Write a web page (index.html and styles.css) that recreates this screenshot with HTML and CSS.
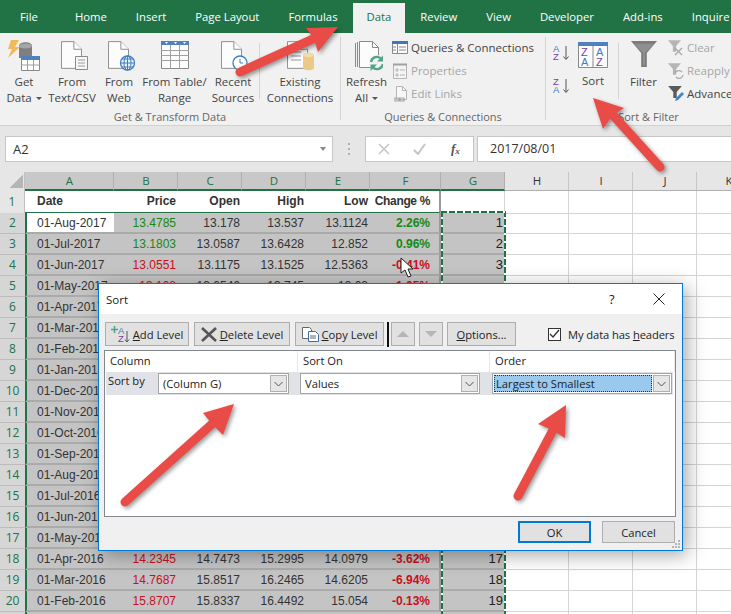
FILE: index.html
```html
<!DOCTYPE html>
<html lang="en">
<head>
<meta charset="utf-8">
<title>Excel Sort dialog</title>
<link rel="stylesheet" href="styles.css">
</head>
<body>
<svg class="defs" width="0" height="0">
  <symbol id="doc" viewBox="0 0 22 29"><path d="M.5.5h13l8 8v20H.5z" fill="#fcfcfc" stroke="#8a8a8a"/><path d="M13.5.5v8h8" fill="#fff" stroke="#8a8a8a"/></symbol>
  <symbol id="chev" viewBox="0 0 9 6"><path d="M.5 1l4 4 4-4" fill="none" stroke="#555" stroke-width="1"/></symbol>
  <symbol id="funnel" viewBox="0 0 16 14"><path d="M0 0h16L10 7v7H6V7z"/></symbol>
</svg>
<div class="app">
  <nav class="tabs">
    <span class="tab file">File</span><span class="tab">Home</span><span class="tab">Insert</span><span class="tab">Page Layout</span><span class="tab">Formulas</span><span class="tab active">Data</span><span class="tab">Review</span><span class="tab">View</span><span class="tab">Developer</span><span class="tab">Add-ins</span><span class="tab">Inquire</span>
  </nav>

  <div class="ribbon">
    <section class="group g-get">
      <div class="group-body">
        <div class="big w-get">
          <svg class="ico" width="32" height="32" viewBox="9 40 32 32"><path d="M20 46c0-5 13-5 13 0v12H20z" fill="#7f7f7f"/><ellipse cx="26.5" cy="46" rx="6.5" ry="2.5" fill="#a6a6a6"/><path d="M12 40h8l-4 7h5L9 58l4-9H9z" fill="#f0b959"/><path d="M22.500 56.500h18v14h-18z" fill="#fff" stroke="#8a8a8a"/><path d="M22 56h19v4H22z" fill="#4f81bd"/><path d="M22 65h19M28.500 60v10M34.500 60v10" stroke="#a0a0a0" fill="none"/></svg>
          <span class="lbl">Get<br>Data <i class="caret"></i></span>
        </div>
        <div class="big w-text">
          <svg class="ico" width="32" height="32" viewBox="56 40 32 32"><use href="#doc" x="61" y="41" width="21" height="28"/><path d="M75.500 56.500h12v13h-12z" fill="#f6f6f6" stroke="#8a8a8a"/><path d="M78 60h7M78 63h7M78 66h7" stroke="#9a9a9a" fill="none"/></svg>
          <span class="lbl">From<br>Text/CSV</span>
        </div>
        <div class="big w-web">
          <svg class="ico" width="32" height="32" viewBox="103 40 32 32"><use href="#doc" x="108" y="41" width="21" height="28"/><circle cx="127.500" cy="63" r="7" fill="#eaf2fa" stroke="#3f7fbf" stroke-width="1.300"/><path d="M120.500 63h14M127.500 56v14M122 59h11M122 67h11" stroke="#3f7fbf" fill="none"/><ellipse cx="127.500" cy="63" rx="3.500" ry="7" fill="none" stroke="#3f7fbf"/></svg>
          <span class="lbl">From<br>Web</span>
        </div>
        <div class="big w-table">
          <svg class="ico" width="32" height="32" viewBox="158 40 32 32"><path d="M160.500 41.500h27v27h-27z" fill="#fcfcfc" stroke="#8a8a8a"/><path d="M160 41h28v4h-28z" fill="#4f81bd"/><path d="M164 42h3l-1.500 2zM173 42h3l-1.500 2zM182 42h3l-1.500 2z" fill="#fff"/><path d="M160 50.500h28M160 55.500h28M160 60.500h28M169.500 45v24M178.500 45v24" stroke="#a0a0a0" fill="none"/></svg>
          <span class="lbl">From Table/<br>Range</span>
        </div>
        <div class="big w-recent">
          <svg class="ico" width="32" height="32" viewBox="217 40 32 32"><use href="#doc" x="221" y="41" width="21" height="28"/><circle cx="240" cy="63" r="7" fill="#fff" stroke="#3f7fbf" stroke-width="1.300"/><path d="M240 59v4h3" stroke="#3f7fbf" fill="none"/></svg>
          <span class="lbl">Recent<br>Sources</span>
        </div>
        <div class="vsep short"></div>
        <div class="big w-exist">
          <svg class="ico" width="32" height="32" viewBox="286 40 32 32"><use href="#doc" x="289" y="41" width="21" height="28"/><path d="M293 52h10M293 56h10M293 60h10" stroke="#9a9a9a" fill="none"/><path d="M305 55c0-3 11-3 11 0v13c0 3-11 3-11 0z" fill="#ecc987"/><ellipse cx="310.500" cy="55" rx="5.500" ry="2" fill="#f3dcae"/></svg>
          <span class="lbl">Existing<br>Connections</span>
        </div>
      </div>
      <div class="group-label">Get &amp; Transform Data</div>
    </section>
    <div class="vsep"></div>

    <section class="group g-query">
      <div class="group-body">
        <div class="big w-refresh">
          <svg class="ico" width="32" height="32" viewBox="350 40 32 32"><path d="M354.500 43v24M356.500 42v25" stroke="#8a8a8a" fill="none"/><path d="M358.500 41.500h13l6 6v20h-19z" fill="#fcfcfc" stroke="#8a8a8a"/><path d="M371.500 41.500v6h6" fill="none" stroke="#8a8a8a"/><circle cx="376" cy="63" r="8" fill="#f3f3f3"/><path d="M370 62a6 6 0 0 1 10.500-3M382 64a6 6 0 0 1-10.500 3" fill="none" stroke="#4fa585" stroke-width="2.400"/><path d="M382.500 55v6.500h-6.500zM369.500 71v-6.500h6.500z" fill="#4fa585"/></svg>
          <span class="lbl">Refresh<br>All <i class="caret"></i></span>
        </div>
        <div class="small-col">
          <div class="small">
            <svg width="17" height="16" viewBox="0 0 17 16"><path d="M.5 1.500h15v12H.5z" fill="#fcfcfc" stroke="#8a8a8a"/><path d="M0 1h16v3H0z" fill="#3f78b5"/><path d="M5.500 4v9M7 7h7M7 10h7M1 7h3M1 10h3" stroke="#8a8a8a" fill="none"/></svg>
            <span>Queries &amp; Connections</span>
          </div>
          <div class="small off">
            <svg width="17" height="16" viewBox="0 0 17 16"><path d="M1.500 1.500h13v14h-13z" fill="#f4f4f4" stroke="#b5b5b5"/><path d="M1 1.500h14" stroke="#a0a0a0" stroke-width="2"/><path d="M4 6h2v2H4zM4 11h2v2H4zM8 7h5M8 12h5" stroke="#b5b5b5" fill="none"/></svg>
            <span>Properties</span>
          </div>
          <div class="small off">
            <svg width="17" height="16" viewBox="0 0 17 16"><path d="M4.500.5h6l4 4v9h-10z" fill="#f8f8f8" stroke="#b5b5b5"/><path d="M10.500.5v4h4" fill="none" stroke="#b5b5b5"/><path d="M3 12h4v3H3zM8 12h4v3H8z" fill="none" stroke="#a5a5a5" stroke-width="1.200"/></svg>
            <span>Edit Links</span>
          </div>
        </div>
      </div>
      <div class="group-label">Queries &amp; Connections</div>
    </section>
    <div class="vsep"></div>

    <section class="group g-sort">
      <div class="group-body">
        <div class="sort-col">
          <svg width="18" height="16" viewBox="0 0 18 16"><text class="az a" x="0" y="7">A</text><text class="az z" x="0" y="15">Z</text><path d="M13 1v13M10.500 11.500l2.500 3 2.500-3" stroke="#555" fill="none"/></svg>
          <svg width="18" height="16" viewBox="0 0 18 16"><text class="az z" x="0" y="7">Z</text><text class="az a" x="0" y="15">A</text><path d="M13 1v13M10.500 11.500l2.500 3 2.500-3" stroke="#555" fill="none"/></svg>
        </div>
        <div class="big w-sort">
          <svg class="ico" width="30" height="26" viewBox="0 0 30 26"><path d="M.5 3.500h29v22H.5zM15 3.500v22" fill="#fcfcfc" stroke="#8a8a8a"/><path d="M0 0h30v4H0z" fill="#4f81bd"/><text class="azb z" x="3" y="14">Z</text><text class="azb a" x="3" y="24">A</text><text class="azb a" x="18" y="14">A</text><text class="azb z" x="18" y="24">Z</text></svg>
          <span class="lbl lbl-sort">Sort</span>
        </div>
        <div class="vsep short"></div>
        <div class="big w-filter">
          <svg class="ico" width="28" height="28" viewBox="0 0 30 30"><path d="M1 1h28L18 14v15h-6V14z" fill="#7b7b7b"/><path d="M4 4h22L16 14v13h-2V14z" fill="#8f8f8f"/></svg>
          <span class="lbl">Filter</span>
        </div>
        <div class="small-col">
          <div class="small off">
            <svg width="17" height="16" viewBox="0 0 17 16"><use href="#funnel" x="0" y="0" width="13" height="12" fill="#b5b5b5"/><path d="M7 8l7 7M14 8l-7 7" stroke="#a8a8a8" stroke-width="1.300"/></svg>
            <span>Clear</span>
          </div>
          <div class="small off">
            <svg width="17" height="16" viewBox="0 0 17 16"><use href="#funnel" x="0" y="0" width="13" height="12" fill="#b5b5b5"/><path d="M7 11a4 4 0 0 1 7-2M15 12a4 4 0 0 1-7 2" stroke="#a8a8a8" fill="none" stroke-width="1.300"/></svg>
            <span>Reapply</span>
          </div>
          <div class="small">
            <svg width="17" height="16" viewBox="0 0 17 16"><use href="#funnel" x="0" y="0" width="14" height="12" fill="#5a5a5a"/><path d="M7 15l1-3 6-6 2 2-6 6z" fill="#3f86c8"/></svg>
            <span>Advanced</span>
          </div>
        </div>
      </div>
      <div class="group-label">Sort &amp; Filter</div>
    </section>
  </div>

  <div class="formula-bar">
    <div class="name-box"><span>A2</span><i class="name-caret"></i></div>
    <div class="grip"></div>
    <div class="fx-box">
      <svg width="12" height="12" viewBox="0 0 12 12"><path d="M1 1l10 10M11 1L1 11" stroke="#c4c4c4" stroke-width="1.500"/></svg>
      <svg width="13" height="12" viewBox="0 0 13 12"><path d="M1 7l4 4 7-10" fill="none" stroke="#c4c4c4" stroke-width="2"/></svg>
      <span class="fx">f<sub>x</sub></span>
    </div>
    <div class="formula-input">2017/08/01</div>
  </div>

  <div class="sheet">
    <div class="col-heads">
      <span class="corner"></span>
      <span class="ch on">A</span><span class="ch on">B</span><span class="ch on">C</span><span class="ch on">D</span><span class="ch on">E</span><span class="ch on">F</span><span class="ch on">G</span><span class="ch">H</span><span class="ch">I</span><span class="ch">J</span><span class="ch">K</span>
    </div>
    <div class="row head-row">
      <span class="rh first">1</span>
      <span class="h date">Date</span><span class="h">Price</span><span class="h">Open</span><span class="h">High</span><span class="h">Low</span><span class="h pct-h">Change %</span><span class="h blank"></span><span class="rest"></span>
    </div>
    <div class="row"><span class="rh">2</span><span class="c date active">01-Aug-2017</span><span class="c up">13.4785</span><span class="c">13.178</span><span class="c">13.537</span><span class="c">13.1124</span><span class="c pct up">2.26%</span><span class="c idx">1</span><span class="rest"></span></div>
    <div class="row"><span class="rh">3</span><span class="c date">01-Jul-2017</span><span class="c up">13.1803</span><span class="c">13.0587</span><span class="c">13.6428</span><span class="c">12.852</span><span class="c pct up">0.96%</span><span class="c idx">2</span><span class="rest"></span></div>
    <div class="row"><span class="rh">4</span><span class="c date">01-Jun-2017</span><span class="c down">13.0551</span><span class="c">13.1175</span><span class="c">13.1525</span><span class="c">12.5363</span><span class="c pct down">-0.41%</span><span class="c idx">3</span><span class="rest"></span></div>
    <div class="row"><span class="rh">5</span><span class="c date">01-May-2017</span><span class="c down">13.108</span><span class="c">13.0546</span><span class="c">13.745</span><span class="c">13.03</span><span class="c pct down">-1.05%</span><span class="c idx"></span><span class="rest"></span></div>
    <div class="row"><span class="rh">6</span><span class="c date">01-Apr-2017</span><span class="c span-6"></span><span class="rest"></span></div>
    <div class="row"><span class="rh">7</span><span class="c date">01-Mar-2017</span><span class="c span-6"></span><span class="rest"></span></div>
    <div class="row"><span class="rh">8</span><span class="c date">01-Feb-2017</span><span class="c span-6"></span><span class="rest"></span></div>
    <div class="row"><span class="rh">9</span><span class="c date">01-Jan-2017</span><span class="c span-6"></span><span class="rest"></span></div>
    <div class="row"><span class="rh">10</span><span class="c date">01-Dec-2016</span><span class="c span-6"></span><span class="rest"></span></div>
    <div class="row"><span class="rh">11</span><span class="c date">01-Nov-2016</span><span class="c span-6"></span><span class="rest"></span></div>
    <div class="row"><span class="rh">12</span><span class="c date">01-Oct-2016</span><span class="c span-6"></span><span class="rest"></span></div>
    <div class="row"><span class="rh">13</span><span class="c date">01-Sep-2016</span><span class="c span-6"></span><span class="rest"></span></div>
    <div class="row"><span class="rh">14</span><span class="c date">01-Aug-2016</span><span class="c span-6"></span><span class="rest"></span></div>
    <div class="row"><span class="rh">15</span><span class="c date">01-Jul-2016</span><span class="c span-6"></span><span class="rest"></span></div>
    <div class="row"><span class="rh">16</span><span class="c date">01-Jun-2016</span><span class="c span-6"></span><span class="rest"></span></div>
    <div class="row"><span class="rh">17</span><span class="c date">01-May-2016</span><span class="c span-6"></span><span class="rest"></span></div>
    <div class="row"><span class="rh">18</span><span class="c date">01-Apr-2016</span><span class="c down">14.2345</span><span class="c">14.7473</span><span class="c">15.2995</span><span class="c">14.0979</span><span class="c pct down">-3.62%</span><span class="c idx">17</span><span class="rest"></span></div>
    <div class="row"><span class="rh">19</span><span class="c date">01-Mar-2016</span><span class="c down">14.7687</span><span class="c">15.8517</span><span class="c">16.2465</span><span class="c">14.6205</span><span class="c pct down">-6.94%</span><span class="c idx">18</span><span class="rest"></span></div>
    <div class="row"><span class="rh">20</span><span class="c date">01-Feb-2016</span><span class="c down">15.8707</span><span class="c">15.8337</span><span class="c">16.4492</span><span class="c">15.054</span><span class="c pct down">-0.13%</span><span class="c idx">19</span><span class="rest"></span></div>
    <div class="row"><span class="rh"></span><span class="c date"></span><span class="c span-6"></span><span class="rest"></span></div>
    <div class="ants"></div>
  </div>

  <svg class="cursor" width="15" height="21" viewBox="0 0 15 21"><path d="M1 1v15l4-3 3 7 3-1-3-7h5z" fill="#fff" stroke="#222"/></svg>

  <div class="dialog">
    <header class="dlg-title">
      <span class="dlg-name">Sort</span>
      <span class="dlg-help">?</span>
      <svg class="dlg-close" width="12" height="12" viewBox="0 0 12 12"><path d="M.5.5l11 11M11.500.5l-11 11" stroke="#222" stroke-width="1"/></svg>
    </header>
    <div class="dlg-body">
      <div class="toolbar">
        <button class="btn b-add"><svg width="19" height="17" viewBox="0 0 19 17"><path d="M3.500 0v7M0 3.500h7" stroke="#4fa585" stroke-width="1.600"/><text class="az a" x="7" y="8">A</text><text class="az z" x="7" y="16">Z</text><path d="M16 5v11M14 13.500l2 2.500 2-2.500" stroke="#555" fill="none"/></svg><span><u>A</u>dd Level</span></button>
        <button class="btn b-del"><svg width="16" height="15" viewBox="0 0 16 15"><path d="M1 1l14 13M15 1L1 14" stroke="#555" stroke-width="2.600"/></svg><span><u>D</u>elete Level</span></button>
        <button class="btn b-copy"><svg width="17" height="15" viewBox="0 0 17 15"><path d="M.5.5h7l2 2v9h-9z" fill="#fff" stroke="#666"/><path d="M6.500 4.500h7l3 3v7h-10z" fill="#fff" stroke="#3a6ea5"/><path d="M8 9h6M8 11h6" stroke="#666"/></svg><span><u>C</u>opy Level</span></button>
        <span class="tool-sep"></span>
        <button class="btn b-arrow"><i class="tri-up"></i></button>
        <button class="btn b-arrow"><i class="tri-down"></i></button>
        <button class="btn b-opt"><span><u>O</u>ptions...</span></button>
        <label class="check"><span class="box"><svg width="11" height="10" viewBox="0 0 11 10"><path d="M1 5l3 3 6-7" fill="none" stroke="#333" stroke-width="1.300"/></svg></span><span class="check-text">My data has <u>h</u>eaders</span></label>
      </div>
      <div class="levels">
        <div class="lv-head"><span>Column</span><span>Sort On</span><span>Order</span></div>
        <div class="lv-row">
          <span class="lv-label">Sort by</span>
          <div class="combo c-col"><span class="combo-text">(Column G)</span><span class="drop"><svg width="9" height="6"><use href="#chev"/></svg></span></div>
          <div class="combo c-on"><span class="combo-text">Values</span><span class="drop"><svg width="9" height="6"><use href="#chev"/></svg></span></div>
          <div class="combo c-order"><span class="combo-text focus">Largest to Smallest</span><span class="drop"><svg width="9" height="6"><use href="#chev"/></svg></span></div>
        </div>
      </div>
      <footer class="dlg-foot">
        <button class="btn b-ok">OK</button>
        <button class="btn b-cancel">Cancel</button>
      </footer>
    </div>
    <svg class="resize" width="8" height="8" viewBox="0 0 8 8"><path d="M6 0h2v2H6zM3 3h2v2H3zM6 3h2v2H6zM0 6h2v2H0zM3 6h2v2H3zM6 6h2v2H6z" fill="#b5b5b5"/></svg>
  </div>

  <svg class="arrows" width="731" height="614" viewBox="0 0 731 614">
    <g class="arrow">
      <path d="M240 72L315 38" class="shaft"/><path d="M338 27L306 28L314 39L318 52z" class="head"/>
    </g>
    <g class="arrow">
      <path d="M660 167L612 114" class="shaft"/><path d="M593 98L624 108L612 116L603 129z" class="head"/>
    </g>
    <g class="arrow">
      <path d="M125 502L212 424" class="shaft"/><path d="M234 404L203 413L212 424L223 435z" class="head"/>
    </g>
    <g class="arrow">
      <path d="M518 496L553 430" class="shaft"/><path d="M566 405L538 424L552 430L565 438z" class="head"/>
    </g>
  </svg>
</div>
</body>
</html>
```

FILE: styles.css
```css
* { box-sizing: border-box; }
html, body { margin: 0; padding: 0; }
body { background: #fff; font-family: "Open Sans", "Noto Sans", sans-serif; font-size: 12px; color: #444; }
.defs { position: absolute; }
.app { position: relative; width: 731px; height: 614px; overflow: hidden; background: #fff; }
svg { display: block; }

/* tabs */
.tabs { display: flex; height: 33px; padding: 3px 0 0 6px; background: #217346; gap: 1px; white-space: nowrap; }
.tab { flex: none; padding: 0 14px; line-height: 28px; color: #fff; font-size: 11.300px; }
.tab.file { margin-right: 8px; }
.tab.active { background: #f1f1f1; color: #217346; }

/* ribbon */
.ribbon { display: flex; height: 93px; background: #f1f1f1; border-bottom: 1px solid #d2d2d2; font-size: 11.500px; white-space: nowrap; }
.group { display: flex; flex-direction: column; flex: none; }
.g-get { width: 340px; }
.g-query { width: 204px; }
.g-sort { width: 205px; }
.group-body { display: flex; height: 76px; }
.group-label { height: 16px; line-height: 16px; text-align: center; color: #666; font-size: 11px; }
.vsep { flex: none; width: 1px; margin: 4px 0 5px; background: #d4d4d4; }
.vsep.short { margin: 10px 0 10px; }
.big { display: flex; flex-direction: column; align-items: center; flex: none; padding-top: 7px; }
.ico { flex: none; height: 32px; }
.lbl { margin-top: 2px; line-height: 16px; text-align: center; color: #444; }
.caret { display: inline-block; width: 0; height: 0; margin: 0 0 2px 1px; border: 3px solid transparent; border-top-color: #555; border-bottom: 0; }
.w-get { width: 48px; }
.w-text { width: 48px; }
.w-web { width: 46px; }
.w-table { width: 65px; }
.w-recent { width: 52px; }
.w-exist { width: 80px; }
.w-refresh { width: 51px; }
.w-sort { width: 30px; padding-top: 9px; }
.w-sort .ico { height: 26px; }
.lbl-sort { margin-top: 5px; }
.w-filter { width: 49px; }
.w-filter .ico { height: 28px; }
.w-filter .lbl { margin-top: 6px; }
.small-col { display: flex; flex-direction: column; padding-top: 3px; }
.small { display: flex; align-items: center; gap: 2px; height: 23px; color: #444; }
.small.off { color: #a6a6a6; }
.sort-col { display: flex; flex-direction: column; gap: 17px; flex: none; width: 25px; margin-left: 7px; padding-top: 12px; }
.g-sort .vsep.short { margin-left: 10px; }
.az { font: 9.500px "Liberation Sans", sans-serif; }
.azb { font: 11px "Liberation Sans", sans-serif; }
.a { fill: #3b7fc4; }
.z { fill: #7a3fa5; }

/* formula bar */
.formula-bar { display: flex; align-items: flex-start; height: 46px; padding: 10px 0 0 5px; background: #e6e6e6; }
.name-box { display: flex; align-items: center; justify-content: space-between; flex: none; width: 328px; height: 26px; padding: 0 6px 0 7px; background: #fff; border: 1px solid #c6c6c6; font-size: 13px; color: #333; }
.name-caret { border: 3.500px solid transparent; border-top: 4px solid #888; border-bottom: 0; }
.grip { flex: none; width: 2px; height: 12px; margin: 7px 15px 0 15px; background: repeating-linear-gradient(#b0b0b0 0 2px, transparent 2px 5px); }
.fx-box { display: flex; align-items: center; flex: none; gap: 23px; width: 109px; height: 26px; padding-left: 12px; background: #fff; border: 1px solid #c6c6c6; }
.fx { margin-left: 2px; font: italic bold 13px "Liberation Serif", serif; color: #555; }
.fx sub { font-size: 9px; vertical-align: -1px; line-height: 0; }
.formula-input { flex: 1; height: 26px; margin-left: 3px; padding-left: 12px; line-height: 24px; background: #fff; border: 1px solid #c6c6c6; border-right: 0; font-size: 12.500px; color: #333; }

/* sheet */
.sheet { position: relative; }
.col-heads { display: grid; grid-template-columns: 25px 89px 64px 64px 64px 64px 71px 64px 64px 64px 64px 64px; height: 19px; background: #e6e6e6; }
.corner { background: linear-gradient(135deg, transparent 50%, #b5b5b5 50%) 10px 2px / 13px 14px no-repeat; border-right: 1px solid #c0c0c0; }
.ch { padding-left: 1px; line-height: 17px; text-align: center; font-size: 11.500px; color: #333; border-right: 1px solid #c6c6c6; border-bottom: 1px solid #b0b0b0; }
.ch.on { background: #c8c8c8; color: #217346; border-right-color: #b0b0b0; border-bottom: 2px solid #217346; }
.row { display: grid; grid-template-columns: 25px 89px 64px 64px 64px 64px 71px 64px 1fr; height: 21px; font: 12px/20px "Liberation Sans", sans-serif; color: #333; }
.head-row { height: 22px; }
.rh { font: 12px/20px "Open Sans", sans-serif; text-align: center; color: #217346; background: #d6d6d6; border-bottom: 1px solid #bcbcbc; }
.rh.first { background: #e6e6e6; line-height: 21px; border-right: 1px solid #c0c0c0; }
.c { padding-right: 2px; text-align: right; background: #c4c4c4; border-bottom: 2px solid #aaa; white-space: nowrap; overflow: hidden; }
.c.date { padding: 0 0 0 10px; text-align: left; border-left: 2px solid #217346; }
.c.active { background: #fff; }
.c.span-6 { grid-column: span 6; }
.up { color: #138a13; }
.down { color: #c8101c; }
.c.pct { padding-right: 9px; font-weight: bold; border-right: 2px solid #9a9a9a; }
.c.idx { font-size: 13px; color: #222; padding-left: 2px; }
.h { padding-right: 2px; text-align: right; font-weight: bold; line-height: 21px; background: #fff; border-bottom: 2px solid #217346; }
.h.date { padding: 0 0 0 12px; text-align: left; }
.h.pct-h { padding-right: 9px; border-right: 2px solid #9a9a9a; white-space: nowrap; letter-spacing: -.35px; }
.h.blank { border-bottom: 1px solid #d4d4d4; border-right: 1px solid #d4d4d4; }
.rest { background: repeating-linear-gradient(to right, transparent 0 63px, #d4d4d4 63px 64px); border-bottom: 1px solid #d4d4d4; }
.ants { position: absolute; left: 441px; top: 39px; width: 65px; height: 410px;
  background:
    repeating-linear-gradient(to right, #217346 0 6px, #fff 6px 8px) 0 0 / 100% 2px no-repeat,
    repeating-linear-gradient(to bottom, #217346 0 6px, #fff 6px 8px) 0 0 / 2px 100% no-repeat,
    repeating-linear-gradient(to bottom, #217346 0 6px, #fff 6px 8px) 100% 0 / 2px 100% no-repeat; }
.cursor { position: absolute; left: 400px; top: 257px; }

/* dialog */
.dialog { position: absolute; left: 98px; top: 283px; width: 585px; height: 268px; display: flex; flex-direction: column; background: #f0f0f0; border: 1px solid #0078d7; box-shadow: 4px 4px 18px rgba(0, 0, 0, .35); color: #222; font-size: 11.200px; white-space: nowrap; }
.dlg-title { display: flex; align-items: center; flex: none; height: 30px; background: #fff; }
.dlg-name { margin-left: 7px; flex: 1; color: #222; font-size: 11.500px; }
.dlg-help { width: 10px; margin-right: 34px; font-size: 13px; }
.dlg-close { margin-right: 17px; }
.dlg-body { display: flex; flex-direction: column; flex: 1; padding: 8px 6px 0 5px; }
.toolbar { display: flex; align-items: center; height: 24px; }
.btn { display: flex; align-items: center; justify-content: center; flex: none; gap: 3px; height: 24px; padding: 0; background: #e1e1e1; border: 1px solid #adadad; font: inherit; color: #222; }
.b-add { width: 84px; margin-left: 1px; }
.b-del { width: 96px; margin-left: 5px; }
.b-copy { width: 89px; margin-left: 5px; }
.tool-sep { flex: none; width: 2px; height: 25px; margin: 0 2px 0 3px; background: #111; }
.b-arrow { width: 24px; margin-right: 4px; background: #e1e1e1; }
.tri-up { border: 6px solid transparent; border-bottom: 6px solid #b5b5b5; border-top: 0; }
.tri-down { border: 6px solid transparent; border-top: 6px solid #b5b5b5; border-bottom: 0; }
.b-opt { width: 69px; }
.check { display: flex; align-items: center; flex: none; gap: 7px; margin-left: 32px; color: #222; }
.check-text { letter-spacing: -.1px; }
.box { display: flex; align-items: center; justify-content: center; width: 13px; height: 13px; background: #fff; border: 1px solid #333; }
.levels { display: flex; flex-direction: column; width: 572px; height: 167px; margin-top: 4px; background: #fff; border: 1px solid #828790; }
.lv-head { display: grid; grid-template-columns: 193px 192px 1fr; height: 21px; line-height: 20px; }
.lv-head span { padding-left: 5px; border-right: 1px solid #e8e8e8; }
.lv-row { display: flex; align-items: center; height: 23px; margin: 0 2px 0 1px; background: #e1e1e8; }
.lv-label { width: 52px; padding: 0 0 6px 2px; }
.combo { display: flex; align-items: center; height: 21px; padding: 1px; background: #fff; border: 1px solid #a5a5a5; }
.c-col { width: 131px; }
.c-on { width: 180px; margin-left: 11px; }
.c-order { width: 180px; margin-left: 12px; }
.combo-text { flex: 1; padding-left: 3px; line-height: 17px; }
.combo-text.focus { height: 17px; padding-left: 2px; background: #99c9ef; outline: 1px dotted #3a2a10; outline-offset: -1px; }
.drop { display: flex; align-items: center; justify-content: center; flex: none; width: 17px; height: 17px; margin-left: 1px; background: #e6e6e6; border: 1px solid #b0b0b0; }
.dlg-foot { display: flex; justify-content: flex-end; gap: 11px; margin-top: 4px; padding-right: 1px; }
.dlg-foot .btn { width: 73px; height: 22px; }
.b-ok { border: 2px solid #0078d7; }
.resize { position: absolute; right: 2px; bottom: 2px; }

/* annotation arrows */
.arrows { position: absolute; left: 0; top: 0; pointer-events: none; }
.arrow { filter: drop-shadow(2px 2px 2px rgba(0, 0, 0, .4)); }
.shaft { stroke: #e94b46; stroke-width: 9; stroke-linecap: round; fill: none; }
.head { fill: #e94b46; }
```
